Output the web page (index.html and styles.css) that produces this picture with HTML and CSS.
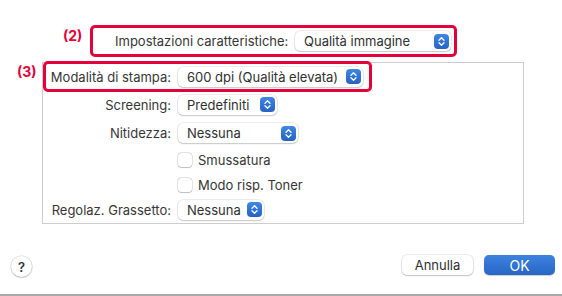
FILE: index.html
```html
<!DOCTYPE html>
<html lang="it">
<head>
<meta charset="utf-8">
<link rel="stylesheet" href="styles.css">
</head>
<body>
<div class="dialog">
  <div class="top">
    <span class="anno anno2">(2)</span>
    <div class="hlbox top-box">
      <span class="top-label">Impostazioni caratteristiche:</span>
      <div class="popup w-qual"><span class="ptext">Qualità immagine</span><span class="stepper"><svg viewBox="0 0 15 15" width="15" height="15"><path d="M5 6.2 L7.5 3.8 L10 6.2 M5 8.8 L7.5 11.2 L10 8.8" fill="none" stroke="#fff" stroke-width="1.3" stroke-linecap="round" stroke-linejoin="round"/></svg></span></div>
    </div>
  </div>
  <div class="main">
    <div class="side"><span class="anno anno3">(3)</span></div>
    <div class="panel">
      <div class="row row1">
        <span class="label">Modalità di stampa:</span>
        <div class="popup w-dpi"><span class="ptext">600 dpi (Qualità elevata)</span><span class="stepper"><svg viewBox="0 0 15 15" width="15" height="15"><path d="M5 6.2 L7.5 3.8 L10 6.2 M5 8.8 L7.5 11.2 L10 8.8" fill="none" stroke="#fff" stroke-width="1.3" stroke-linecap="round" stroke-linejoin="round"/></svg></span></div>
        <span class="hl-frame"></span>
      </div>
      <div class="row row2">
        <span class="label">Screening:</span>
        <div class="popup w-pre"><span class="ptext">Predefiniti</span><span class="stepper"><svg viewBox="0 0 15 15" width="15" height="15"><path d="M5 6.2 L7.5 3.8 L10 6.2 M5 8.8 L7.5 11.2 L10 8.8" fill="none" stroke="#fff" stroke-width="1.3" stroke-linecap="round" stroke-linejoin="round"/></svg></span></div>
      </div>
      <div class="row row3">
        <span class="label">Nitidezza:</span>
        <div class="popup w-nit"><span class="ptext">Nessuna</span><span class="stepper"><svg viewBox="0 0 15 15" width="15" height="15"><path d="M5 6.2 L7.5 3.8 L10 6.2 M5 8.8 L7.5 11.2 L10 8.8" fill="none" stroke="#fff" stroke-width="1.3" stroke-linecap="round" stroke-linejoin="round"/></svg></span></div>
      </div>
      <div class="row row4">
        <span class="label"></span>
        <label class="check"><span class="box"></span><span>Smussatura</span></label>
      </div>
      <div class="row row5">
        <span class="label"></span>
        <label class="check"><span class="box"></span><span>Modo risp. Toner</span></label>
      </div>
      <div class="row row6">
        <span class="label">Regolaz. Grassetto:</span>
        <div class="popup w-gra"><span class="ptext">Nessuna</span><span class="stepper"><svg viewBox="0 0 15 15" width="15" height="15"><path d="M5 6.2 L7.5 3.8 L10 6.2 M5 8.8 L7.5 11.2 L10 8.8" fill="none" stroke="#fff" stroke-width="1.3" stroke-linecap="round" stroke-linejoin="round"/></svg></span></div>
      </div>
    </div>
  </div>
  <div class="footer">
    <span class="help">?</span>
    <span class="spacer"></span>
    <span class="btn cancel">Annulla</span>
    <span class="btn ok">OK</span>
  </div>
</div>
</body>
</html>
```

FILE: styles.css
```css
* { box-sizing: border-box; }
html, body { margin: 0; padding: 0; background: #fff; }
body {
  width: 562px;
  height: 296px;
  overflow: hidden;
  font-family: "Inter", "Liberation Sans", sans-serif;
  font-size: 13px;
  color: #363636;
}
.dialog {
  width: 562px;
  height: 296px;
  display: flex;
  flex-direction: column;
  border-bottom: 2px solid #a9a9a9;
}
.anno {
  color: #e4003b;
  font-weight: 700;
  font-size: 14px;
  line-height: 14px;
}
.top {
  display: flex;
  align-items: flex-start;
  padding-top: 25px;
  padding-left: 63px;
  height: 62px;
}
.anno2 { width: 27px; margin-top: 4px; }
.hlbox {
  border: 3px solid #e4003b;
  border-radius: 5px;
}
.top-box {
  width: 367px;
  height: 32px;
  display: flex;
  align-items: center;
  padding-left: 22px;
}
.top-label { width: 180px; }
.popup {
  height: 20px;
  display: flex;
  align-items: center;
  justify-content: space-between;
  background: #fff;
  border-radius: 5px;
  box-shadow: 0 0 0 0.5px rgba(0,0,0,0.14), 0 1px 1.5px rgba(0,0,0,0.16);
  padding: 0 2px 0 9px;
  color: #303030;
}
.ptext { white-space: nowrap; }
.stepper {
  width: 15px;
  height: 15px;
  border-radius: 4px;
  background: linear-gradient(#3f87e6, #2563c2);
  display: flex;
}
.w-qual { width: 156px; }
.w-dpi { width: 185px; }
.w-pre { width: 99px; }
.w-nit { width: 120px; }
.w-gra { width: 86px; }
.main {
  display: flex;
  height: 162px;
}
.side { width: 42px; }
.anno3 { display: block; margin-top: 3px; margin-left: 17px; }
.panel {
  width: 482px;
  height: 162px;
  border: 1px solid #cdcdcd;
  display: flex;
  flex-direction: column;
}
.row {
  display: flex;
  align-items: center;
  position: relative;
}
.label {
  width: 135px;
  padding-right: 7px;
  text-align: right;
  white-space: nowrap;
}
.row1 { height: 27px; }
.row2 { height: 29px; }
.row3 { height: 28px; }
.row4 { height: 25px; }
.row5 { height: 25px; }
.row6 { height: 25px; }
.hl-frame {
  position: absolute;
  left: 0;
  top: -2px;
  bottom: -2px;
  width: 329px;
  border: 3px solid #e4003b;
  border-radius: 5px;
}
.check {
  display: flex;
  align-items: center;
  gap: 6px;
}
.box {
  width: 14px;
  height: 14px;
  border-radius: 3.5px;
  background: #fff;
  box-shadow: 0 0 0 0.5px rgba(0,0,0,0.2), 0 0.5px 1px rgba(0,0,0,0.18);
}
.footer {
  flex: 1;
  display: flex;
  align-items: flex-start;
  padding: 31px 7px 0 11px;
}
.help {
  width: 21px;
  height: 21px;
  margin-top: 1px;
  border-radius: 50%;
  background: #fff;
  box-shadow: 0 0 0 0.5px rgba(0,0,0,0.15), 0 1px 1.5px rgba(0,0,0,0.2);
  display: flex;
  align-items: center;
  justify-content: center;
  font-weight: 600;
  font-size: 13px;
  color: #333;
}
.spacer { flex: 1; }
.btn {
  width: 71px;
  height: 20px;
  border-radius: 5px;
  display: flex;
  align-items: center;
  justify-content: center;
}
.cancel {
  background: #fff;
  box-shadow: 0 0 0 0.5px rgba(0,0,0,0.15), 0 1px 1.5px rgba(0,0,0,0.18);
  color: #303030;
}
.ok {
  margin-left: 11px;
  background: linear-gradient(#3d82df, #2866c4);
  color: #fff;
  font-size: 14px;
  box-shadow: 0 0.5px 1px rgba(0,0,0,0.2);
}
```
